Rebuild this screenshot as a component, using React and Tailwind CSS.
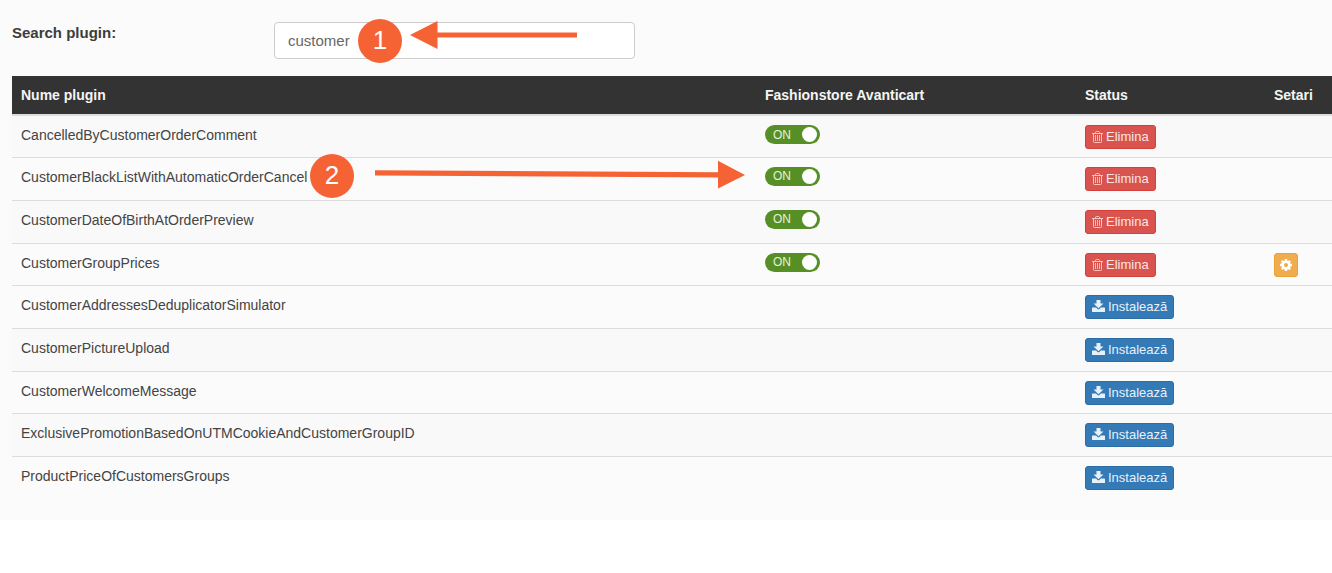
import React, { useState } from 'react'

const initialPlugins = [
  { id: 1, name: "CancelledByCustomerOrderComment", installed: true },
  { id: 4, name: "CustomerBlackListWithAutomaticOrderCancel", installed: true },
  { id: 5, name: "CustomerDateOfBirthAtOrderPreview", installed: true },
  { id: 6, name: "CustomerGroupPrices", installed: true, settings: true },
  { id: 12, name: "CustomerAddressesDeduplicatorSimulator" },
  { id: 13, name: "CustomerPictureUpload" },
  { id: 14, name: "CustomerWelcomeMessage" },
  { id: 17, name: "ExclusivePromotionBasedOnUTMCookieAndCustomerGroupID" },
  { id: 20, name: "ProductPriceOfCustomersGroups" },
]

const TrashIcon = () => (
  <svg className="w-[11px] h-3 shrink-0 opacity-80" viewBox="0 0 11 12" fill="none" stroke="currentColor" aria-hidden="true">
    <path d="M0 2.500h11M3.500 2.500V1.500Q3.500 .5 4.500 .5h2Q7.500 .5 7.500 1.500v1M1.500 2.500v8Q1.500 11.500 2.500 11.500h6Q9.500 11.500 9.500 10.500v-8" />
    <path d="M3.500 4v6M5.500 4v6M7.500 4v6" strokeWidth=".9" />
  </svg>
)

const DownloadIcon = () => (
  <svg className="w-[13px] h-[13px] shrink-0" viewBox="0 0 13 13" fill="currentColor" aria-hidden="true">
    <path d="M4.500 0h4v3.500h3L6.500 8.300 1.500 3.500h3z" />
    <path d="M.6 7.500h3.500l1.400 1.400q1 .8 2 0l1.400-1.400h3.500q.6 0 .6.600v3.300q0 .6-.6.600H.6q-.6 0-.6-.6V8.100q0-.6.600-.6z" />
  </svg>
)

const GearIcon = () => (
  <svg className="w-3 h-3" viewBox="0 0 1536 1536" fill="currentColor" aria-hidden="true">
    <path d="M1024 768q0-106-75-181t-181-75-181 75-75 181 75 181 181 75 181-75 75-181zm512-109v222q0 12-8 23t-20 13l-185 28q-19 54-39 91 35 50 107 138 10 12 10 25t-9 23q-27 37-99 108t-94 71q-12 0-26-9l-138-108q-44 23-91 38-16 136-29 186-7 28-36 28H657q-14 0-24.500-8.500T621 1506l-28-184q-49-16-90-37l-141 107q-10 9-25 9-14 0-25-11-126-114-165-168-7-10-7-23 0-12 8-23 15-21 51-66.500t54-70.500q-27-50-41-99L29 913q-13-2-21-12.500T0 877V655q0-12 8-23t19-13l186-28q14-46 39-92-40-57-107-138-10-12-10-24 0-10 9-23 26-36 98.500-107.500T337 135q13 0 26 10l138 107q44-23 91-38 16-136 29-186 7-28 36-28h222q14 0 24.500 8.500T915 30l28 184q49 16 90 37l142-107q9-9 24-9 13 0 25 10 129 119 165 170 7 8 7 22 0 12-8 23-15 21-51 66.500t-54 70.500q26 50 41 98l183 28q13 2 21 12.500t8 23.500z" />
  </svg>
)

const Toggle = ({ label }) => {
  const [on, setOn] = useState(true)

  return (
    <button
      type="button"
      role="switch"
      aria-checked={on}
      aria-label={label}
      onClick={() => setOn(!on)}
      className={`flex items-center justify-between w-[55px] h-[19px] pl-2 pr-[3px] rounded-full text-[#e6f0dc] ${on ? "bg-[#568f26]" : "bg-gray-400 flex-row-reverse"}`}
    >
      <span className="text-[12px] leading-4">{on ? "ON" : "OFF"}</span>
      <span className="w-[15px] h-[15px] rounded-full bg-white" />
    </button>
  )
}

const Marker = ({ children, className }) => (
  <span className={`absolute flex items-center justify-center w-11 h-11 pb-[3px] rounded-full bg-[#f56334] text-white text-[26px] leading-none pointer-events-none ${className}`}>
    {children}
  </span>
)

const App = () => {
  const [search, setSearch] = useState("customer")
  const [plugins, setPlugins] = useState(initialPlugins)

  const setInstalled = (id, installed) => {
    setPlugins(plugins.map((p) => (p.id === id ? { ...p, installed } : p)))
  }

  const visible = plugins.filter((p) => p.name.toLowerCase().includes(search.toLowerCase()))

  return (
    <div className="relative bg-[#fbfbfb] pl-3 pt-[22px] pb-[21px] overflow-hidden text-[#444] font-[Liberation_Sans,Arial,sans-serif]">
      <div className="flex items-start mb-[17px]">
        <label htmlFor="search" className="w-[262px] text-[15px] leading-[22px] font-bold text-[#3c3c3c]">
          Search plugin:
        </label>
        <input
          id="search"
          type="text"
          value={search}
          onChange={(e) => setSearch(e.target.value)}
          className="w-[361px] h-[37px] px-[13px] bg-white border border-[#ccc] rounded text-[15px] text-[#666] outline-none"
        />
      </div>

      <table className="w-full table-fixed border-collapse text-left text-[14px]">
        <thead>
          <tr className="h-[39px] bg-[#333] text-[#f5f5f5] border-b-2 border-[#ddd]">
            <th className="px-[9px]">Nume plugin</th>
            <th className="w-[320px] px-[9px]">Fashionstore Avanticart</th>
            <th className="w-[189px] px-[9px]">Status</th>
            <th className="w-[67px] pl-[9px]">Setari</th>
          </tr>
        </thead>
        <tbody>
          {visible.map((plugin) => (
            <tr
              key={plugin.id}
              className={`h-[43px] nth-[3n+1]:h-[42px] border-b border-[#ddd] last:border-b-0 align-top ${plugin.id % 2 ? "bg-[#f9f9f9]" : ""}`}
            >
              <td className="px-[9px] pt-[9px] leading-5">{plugin.name}</td>
              <td className="px-[9px] pt-[9px]">
                {plugin.installed && <Toggle label={plugin.name} />}
              </td>
              <td className="px-[9px] pt-[9px]">
                {plugin.installed ? (
                  <button
                    type="button"
                    onClick={() => setInstalled(plugin.id, false)}
                    className="flex items-center gap-[3px] h-6 px-1.5 rounded-[3px] border border-[#d43f3a] bg-[#d9534f] text-[13px] text-[#fbe6e5]"
                  >
                    <TrashIcon />
                    Elimina
                  </button>
                ) : (
                  <button
                    type="button"
                    onClick={() => setInstalled(plugin.id, true)}
                    className="flex items-center gap-[3px] h-6 px-1.5 rounded-[3px] border border-[#2e6da4] bg-[#337ab7] text-[13px] text-[#e8f1f8]"
                  >
                    <DownloadIcon />
                    Instalează
                  </button>
                )}
              </td>
              <td className="pl-[9px] pt-[9px]">
                {plugin.settings && (
                  <button
                    type="button"
                    aria-label="Setari"
                    className="flex items-center justify-center w-6 h-6 rounded-[3px] border border-[#eea236] bg-[#f0ad4e] text-white"
                  >
                    <GearIcon />
                  </button>
                )}
              </td>
            </tr>
          ))}
        </tbody>
      </table>

      {/* step markers */}
      <Marker className="left-[358px] top-[19px]">1</Marker>
      <svg className="absolute left-[410px] top-[21px] w-[167px] h-7 pointer-events-none" viewBox="0 0 167 28" fill="#f56334" aria-hidden="true">
        <path d="M0 14L27.500 0v11.500H167v5H27.500V28z" />
      </svg>
      <Marker className="left-[310px] top-[154px]">2</Marker>
      <svg className="absolute left-[375px] top-[160px] w-[371px] h-[29px] pointer-events-none" viewBox="0 0 371 29" fill="#f56334" aria-hidden="true">
        <path d="M0 10.200L343 12.200V.8L370 15 343 28.500V17.600L0 15.400z" />
      </svg>
    </div>
  )
}

export default App
